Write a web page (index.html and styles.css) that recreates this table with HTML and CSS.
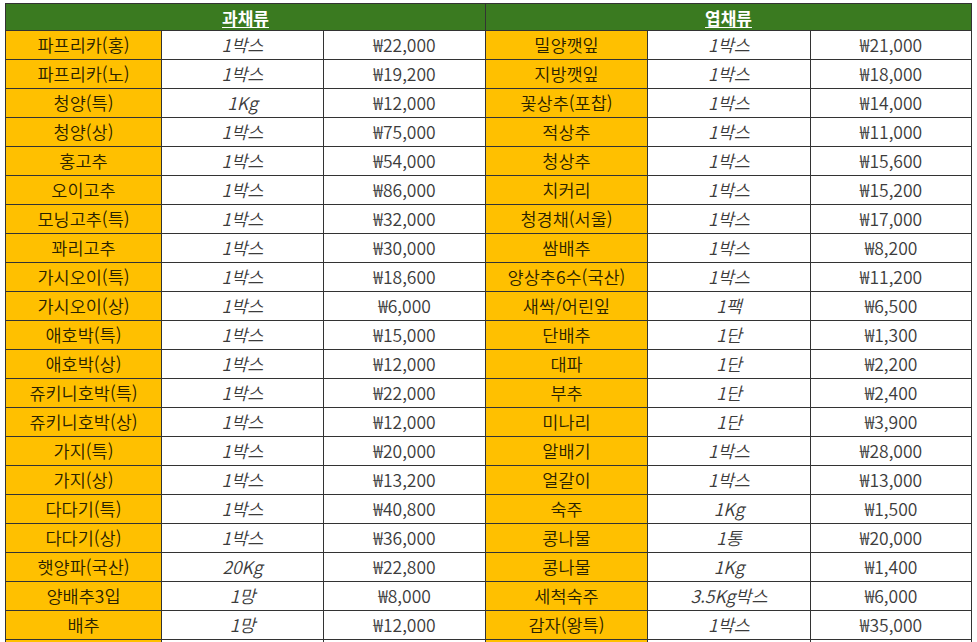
FILE: index.html
```html
<!DOCTYPE html>
<html lang="ko">
<head>
<meta charset="utf-8">
<title>시세표</title>
<link rel="stylesheet" href="styles.css">
</head>
<body>
<div class="sheet">
  <div class="head">과채류</div>
  <div class="head">엽채류</div>

  <div class="name">파프리카(홍)</div><div class="unit">1박스</div><div class="price">₩22,000</div>
  <div class="name">밀양깻잎</div><div class="unit">1박스</div><div class="price">₩21,000</div>

  <div class="name">파프리카(노)</div><div class="unit">1박스</div><div class="price">₩19,200</div>
  <div class="name">지방깻잎</div><div class="unit">1박스</div><div class="price">₩18,000</div>

  <div class="name">청양(특)</div><div class="unit">1Kg</div><div class="price">₩12,000</div>
  <div class="name">꽃상추(포찹)</div><div class="unit">1박스</div><div class="price">₩14,000</div>

  <div class="name">청양(상)</div><div class="unit">1박스</div><div class="price">₩75,000</div>
  <div class="name">적상추</div><div class="unit">1박스</div><div class="price">₩11,000</div>

  <div class="name">홍고추</div><div class="unit">1박스</div><div class="price">₩54,000</div>
  <div class="name">청상추</div><div class="unit">1박스</div><div class="price">₩15,600</div>

  <div class="name">오이고추</div><div class="unit">1박스</div><div class="price">₩86,000</div>
  <div class="name">치커리</div><div class="unit">1박스</div><div class="price">₩15,200</div>

  <div class="name">모닝고추(특)</div><div class="unit">1박스</div><div class="price">₩32,000</div>
  <div class="name">청경채(서울)</div><div class="unit">1박스</div><div class="price">₩17,000</div>

  <div class="name">꽈리고추</div><div class="unit">1박스</div><div class="price">₩30,000</div>
  <div class="name">쌈배추</div><div class="unit">1박스</div><div class="price">₩8,200</div>

  <div class="name">가시오이(특)</div><div class="unit">1박스</div><div class="price">₩18,600</div>
  <div class="name">양상추6수(국산)</div><div class="unit">1박스</div><div class="price">₩11,200</div>

  <div class="name">가시오이(상)</div><div class="unit">1박스</div><div class="price">₩6,000</div>
  <div class="name">새싹/어린잎</div><div class="unit">1팩</div><div class="price">₩6,500</div>

  <div class="name">애호박(특)</div><div class="unit">1박스</div><div class="price">₩15,000</div>
  <div class="name">단배추</div><div class="unit">1단</div><div class="price">₩1,300</div>

  <div class="name">애호박(상)</div><div class="unit">1박스</div><div class="price">₩12,000</div>
  <div class="name">대파</div><div class="unit">1단</div><div class="price">₩2,200</div>

  <div class="name">쥬키니호박(특)</div><div class="unit">1박스</div><div class="price">₩22,000</div>
  <div class="name">부추</div><div class="unit">1단</div><div class="price">₩2,400</div>

  <div class="name">쥬키니호박(상)</div><div class="unit">1박스</div><div class="price">₩12,000</div>
  <div class="name">미나리</div><div class="unit">1단</div><div class="price">₩3,900</div>

  <div class="name">가지(특)</div><div class="unit">1박스</div><div class="price">₩20,000</div>
  <div class="name">알배기</div><div class="unit">1박스</div><div class="price">₩28,000</div>

  <div class="name">가지(상)</div><div class="unit">1박스</div><div class="price">₩13,200</div>
  <div class="name">얼갈이</div><div class="unit">1박스</div><div class="price">₩13,000</div>

  <div class="name">다다기(특)</div><div class="unit">1박스</div><div class="price">₩40,800</div>
  <div class="name">숙주</div><div class="unit">1Kg</div><div class="price">₩1,500</div>

  <div class="name">다다기(상)</div><div class="unit">1박스</div><div class="price">₩36,000</div>
  <div class="name">콩나물</div><div class="unit">1통</div><div class="price">₩20,000</div>

  <div class="name">햇양파(국산)</div><div class="unit">20Kg</div><div class="price">₩22,800</div>
  <div class="name">콩나물</div><div class="unit">1Kg</div><div class="price">₩1,400</div>

  <div class="name">양배추3입</div><div class="unit">1망</div><div class="price">₩8,000</div>
  <div class="name">세척숙주</div><div class="unit">3.5Kg박스</div><div class="price">₩6,000</div>

  <div class="name">배추</div><div class="unit">1망</div><div class="price">₩12,000</div>
  <div class="name">감자(왕특)</div><div class="unit">1박스</div><div class="price">₩35,000</div>

  <div class="name"></div><div class="unit"></div><div class="price"></div>
  <div class="name"></div><div class="unit"></div><div class="price"></div>
</div>
</body>
</html>
```

FILE: styles.css
```css
html, body {
  margin: 0;
  padding: 0;
  background: #ffffff;
  overflow: hidden;
}

body {
  padding: 3px 0 0 5px;
  font-family: "Noto Sans CJK KR", "Noto Sans", sans-serif;
}

.sheet {
  display: grid;
  grid-template-columns: 155px 161px 161px 161px 162px 160px;
  grid-template-rows: 26px;
  grid-auto-rows: 28px;
  gap: 1px;
  padding: 1px;
  width: max-content;
  background: #333333;
}

.sheet > div {
  display: flex;
  align-items: center;
  justify-content: center;
  white-space: nowrap;
  line-height: 1;
}

.head {
  grid-column: span 3;
  background: #3a7a20;
  color: #ffffff;
  font-weight: 700;
  font-size: 17px;
  text-decoration: underline;
  text-underline-offset: 2px;
}

.name {
  background: #ffc000;
  color: #2a2200;
  font-size: 17.5px;
  font-weight: 350;
}

.unit {
  background: #ffffff;
  color: #3c3c3c;
  font-size: 17.5px;
  font-weight: 350;
  font-style: italic;
}

.price {
  background: #ffffff;
  color: #3c3c3c;
  font-size: 17.5px;
  font-weight: 350;
}
```
